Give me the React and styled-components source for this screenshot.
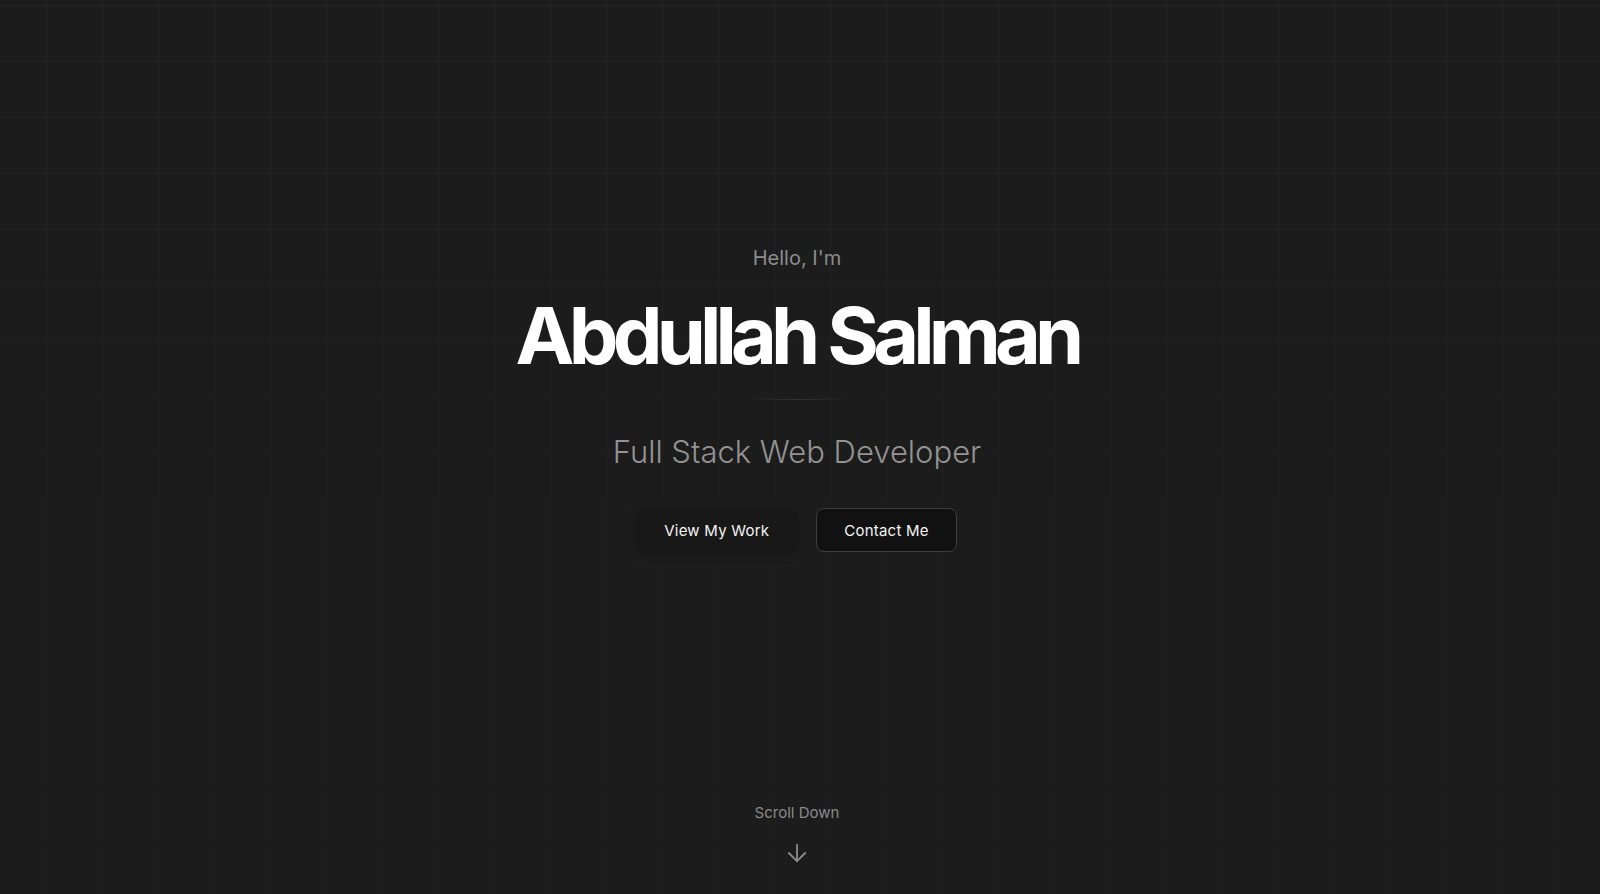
import styled, { createGlobalStyle } from "styled-components";
import { ArrowDown } from "lucide-react";

const GlobalStyle = createGlobalStyle`
  html, body {
    margin: 0;
    padding: 0;
    background: #1c1c1c;
  }
  body {
    font-family: Inter, "Noto Sans", sans-serif;
    -webkit-font-smoothing: antialiased;
  }
`;

const Hero = styled.section`
  position: relative;
  min-height: 100vh;
  box-sizing: border-box;
  padding: 244px 30px 27px 24px;
  display: flex;
  flex-direction: column;
  align-items: center;
  background-color: #1c1c1c;
  overflow: hidden;

  &::before {
    content: "";
    position: absolute;
    inset: 0;
    background-image:
      linear-gradient(to right, rgba(255, 255, 255, 0.035) 1px, transparent 1px),
      linear-gradient(to bottom, rgba(255, 255, 255, 0.035) 1px, transparent 1px);
    background-size: 56px 56px;
    background-position: 46px 5px;
    -webkit-mask-image: linear-gradient(to bottom, #000 0%, rgba(0, 0, 0, 0.5) 55%, rgba(0, 0, 0, 0.35) 100%);
    mask-image: linear-gradient(to bottom, #000 0%, rgba(0, 0, 0, 0.5) 55%, rgba(0, 0, 0, 0.35) 100%);
    pointer-events: none;
  }
`;

const Content = styled.div`
  position: relative;
  display: flex;
  flex-direction: column;
  align-items: center;
  text-align: center;
`;

const Greeting = styled.p`
  margin: 0;
  font-size: 20px;
  line-height: 28px;
  font-weight: 400;
  color: #8c8c8c;
`;

const Name = styled.h1`
  margin: 23px 0 0;
  font-size: 79px;
  line-height: 80px;
  font-weight: 700;
  letter-spacing: -0.074em;
  color: #ffffff;
`;

const Divider = styled.div`
  width: 100px;
  height: 1px;
  margin-top: 24px;
  background: linear-gradient(to right, transparent, #343434, transparent);
`;

const Role = styled.h2`
  margin: 32px 0 0;
  font-size: 31px;
  line-height: 40px;
  font-weight: 300;
  color: #939393;
`;

const Actions = styled.div`
  display: flex;
  gap: 20px;
  margin-top: 36px;
`;

const Button = styled.button`
  height: 44px;
  padding: 0 ${(p) => (p.$outline ? "27px" : "26px")};
  border-radius: 8px;
  font-family: inherit;
  font-size: 15px;
  font-weight: 400;
  letter-spacing: 0.015em;
  color: #f4f4f4;
  cursor: pointer;
  background: ${(p) => (p.$outline ? "#111111" : "#181818")};
  border: 1px solid ${(p) => (p.$outline ? "#3e3e3e" : "transparent")};
  box-shadow: ${(p) => (p.$outline ? "none" : "0 2px 10px rgba(0, 0, 0, 0.25)")};
`;

const Scroll = styled.div`
  position: relative;
  margin-top: auto;
  display: flex;
  flex-direction: column;
  align-items: center;
  gap: 16px;
  color: #8a8a8a;
`;

const ScrollLabel = styled.span`
  font-size: 15px;
  line-height: 20px;
`;

export default function App() {
  return (
    <>
      <GlobalStyle />
      <Hero>
        <Content>
          <Greeting>Hello, I'm</Greeting>
          <Name>Abdullah Salman</Name>
          <Divider />
          <Role>Full Stack Web Developer</Role>
          <Actions>
            <Button>View My Work</Button>
            <Button $outline>Contact Me</Button>
          </Actions>
        </Content>
        <Scroll>
          <ScrollLabel>Scroll Down</ScrollLabel>
          <ArrowDown size={28} strokeWidth={1.6} />
        </Scroll>
      </Hero>
    </>
  );
}
